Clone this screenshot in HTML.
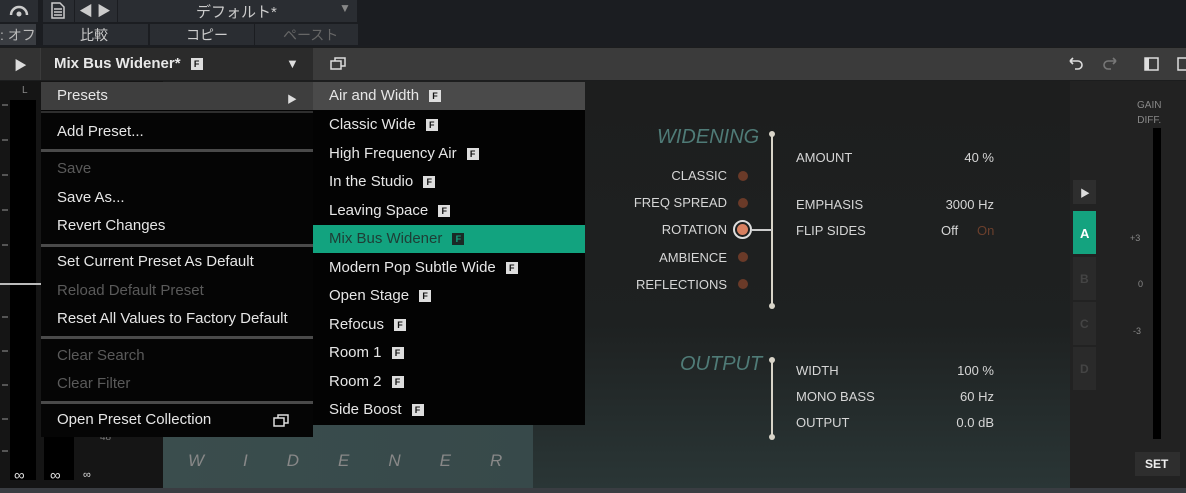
<!DOCTYPE html>
<html><head><meta charset="utf-8"><style>
*{margin:0;padding:0;box-sizing:border-box}
body{width:1186px;height:493px;overflow:hidden;background:#1c1d1e;font-family:"Liberation Sans","Noto Sans CJK JP",sans-serif;position:relative;color:#ddd}
.a{position:absolute}
.t{position:absolute;white-space:nowrap}
.f{display:inline-block;width:12px;height:12px;background:#ddd;color:#111;font-size:9px;font-weight:bold;line-height:12px;text-align:center;margin-left:10px;vertical-align:1px}
.mi{position:absolute;left:57px;font-size:15px;color:#e6e6e6;white-space:nowrap}
.dim{color:#5a5a5a}
.si{position:absolute;left:329px;font-size:15px;color:#e6e6e6;white-space:nowrap}
.sep{position:absolute;left:41px;width:272px;height:3px;background:#4a4a4a}
.lb{position:absolute;font-size:13px;color:#d6d6d6;white-space:nowrap}
.r{text-align:right}
.dot{position:absolute;width:10px;height:10px;border-radius:50%;background:#6a3a28}
.tk{position:absolute;width:6px;height:2px;background:#555}
</style></head><body>
<!-- top bar -->
<div class="a" style="left:0;top:0;width:1186px;height:47px;background:#1b1d21"></div>
<div class="a" style="left:0;top:0;width:38px;height:22px;background:#2a2d32"></div>
<svg class="a" style="left:8px;top:3px" width="22" height="14"><path d="M3 12 A8 8 0 0 1 19 12" stroke="#ccc" stroke-width="2.5" fill="none"/><circle cx="11" cy="11" r="2.5" fill="#ccc"/></svg>
<div class="a" style="left:0;top:24px;width:36px;height:21px;background:#3a3d42"></div>
<div class="t" style="left:0;top:25px;font-size:14px;color:#bbb">: オフ</div>
<div class="a" style="left:43px;top:0;width:31px;height:22px;background:#2a2d32"></div>
<svg class="a" style="left:51px;top:2px" width="14" height="17"><path d="M1 1h8l4 4v11H1z M3 7h8 M3 10h8 M3 13h8" stroke="#ccc" stroke-width="1.5" fill="none"/></svg>
<div class="a" style="left:75px;top:0;width:42px;height:22px;background:#2a2d32"></div>
<div class="t" style="left:79px;top:1px;font-size:14px;color:#ccc">◀ ▶</div>
<div class="a" style="left:118px;top:0;width:239px;height:22px;background:#2a2d32"></div>
<div class="t" style="left:196px;top:1px;font-size:15px;color:#ccc">デフォルト*</div>
<div class="t" style="left:339px;top:1px;font-size:12px;color:#888">▼</div>
<div class="a" style="left:43px;top:24px;width:105px;height:21px;background:#2a2d32"></div>
<div class="t" style="left:80px;top:25px;font-size:14px;color:#ccc">比較</div>
<div class="a" style="left:150px;top:24px;width:104px;height:21px;background:#2a2d32"></div>
<div class="t" style="left:186px;top:25px;font-size:14px;color:#ccc">コピー</div>
<div class="a" style="left:255px;top:24px;width:103px;height:21px;background:#2a2d32"></div>
<div class="t" style="left:283px;top:25px;font-size:14px;color:#666">ペースト</div>
<!-- header -->
<div class="a" style="left:0;top:48px;width:1186px;height:32px;background:#3b3b3b"></div>
<div class="a" style="left:0;top:48px;width:40px;height:32px;background:#333"></div>
<div class="t" style="left:14px;top:55px;font-size:13px;color:#ddd">▶</div>
<div class="a" style="left:41px;top:48px;width:272px;height:32px;background:#2b2b2b"></div>
<div class="t" style="left:54px;top:55px;font-size:15px;font-weight:bold;color:#e8e8e8">Mix Bus Widener*<span class="f">F</span></div>
<div class="t" style="left:286px;top:56px;font-size:13px;color:#ddd">▼</div>
<svg class="a" style="left:330px;top:57px" width="16" height="14"><rect x="5" y="1" width="10" height="8" stroke="#ddd" stroke-width="1.5" fill="none"/><rect x="1" y="4" width="10" height="8" stroke="#ddd" stroke-width="1.5" fill="#3b3b3b"/></svg>
<svg class="a" style="left:1066px;top:56px" width="120" height="18"><path d="M4 5h8a4 4 0 0 1 0 8h-3 M4 5l3-3 M4 5l3 3" stroke="#ddd" stroke-width="1.6" fill="none"/><path d="M50 5h-8a4 4 0 0 0 0 8h3 M50 5l-3-3 M50 5l-3 3" stroke="#777" stroke-width="1.6" fill="none"/><rect x="79" y="2" width="13" height="12" stroke="#ddd" stroke-width="1.5" fill="none"/><rect x="79" y="2" width="4" height="12" fill="#ddd"/><rect x="112" y="2" width="10" height="12" stroke="#ddd" stroke-width="1.5" fill="none"/></svg>
<!-- left meters -->
<div class="a" style="left:0;top:81px;width:163px;height:407px;background:#151515"></div>
<div class="a" style="left:10px;top:100px;width:26px;height:380px;background:#000"></div>
<div class="a" style="left:44px;top:100px;width:30px;height:380px;background:#000"></div>
<div class="tk" style="left:2px;top:104px"></div><div class="tk" style="left:2px;top:139px"></div><div class="tk" style="left:2px;top:174px"></div><div class="tk" style="left:2px;top:209px"></div><div class="tk" style="left:2px;top:244px"></div><div class="tk" style="left:2px;top:316px"></div><div class="tk" style="left:2px;top:350px"></div><div class="tk" style="left:2px;top:384px"></div><div class="tk" style="left:2px;top:418px"></div><div class="tk" style="left:2px;top:450px"></div>
<div class="a" style="left:0;top:283px;width:41px;height:2px;background:#bbb"></div>
<div class="t" style="left:22px;top:85px;font-size:10px;color:#888">L</div>
<div class="t" style="left:14px;top:467px;font-size:15px;color:#ddd">∞</div>
<div class="t" style="left:50px;top:467px;font-size:15px;color:#ddd">∞</div>
<div class="t" style="left:83px;top:469px;font-size:11px;color:#ddd">∞</div>
<div class="t" style="left:100px;top:432px;font-size:10px;color:#777">48</div>
<!-- plugin bg -->
<div class="a" style="left:163px;top:81px;width:907px;height:407px;background:linear-gradient(180deg,#1d1e1e 0%,#1e2121 60%,#2a3636 100%)"></div>
<div class="a" style="left:163px;top:425px;width:370px;height:63px;background:linear-gradient(90deg,#3a4d4d,#37494a)"></div>
<div class="t" style="left:188px;top:451px;font-size:17px;font-style:italic;color:#888;letter-spacing:39px">WIDENER</div>
<!-- widening -->
<div class="t" style="left:657px;top:126px;font-size:20px;font-style:italic;color:#4f7b77">WIDENING</div>
<div class="a" style="left:771px;top:133px;width:2px;height:174px;background:#d8d4c8"></div>
<div class="a" style="left:769px;top:131px;width:6px;height:6px;border-radius:50%;background:#d8d4c8"></div>
<div class="a" style="left:769px;top:303px;width:6px;height:6px;border-radius:50%;background:#d8d4c8"></div>
<div class="lb r" style="left:600px;width:127px;top:168px">CLASSIC</div>
<div class="lb r" style="left:600px;width:127px;top:195px">FREQ SPREAD</div>
<div class="lb r" style="left:600px;width:127px;top:222px">ROTATION</div>
<div class="lb r" style="left:600px;width:127px;top:250px">AMBIENCE</div>
<div class="lb r" style="left:600px;width:127px;top:277px">REFLECTIONS</div>
<div class="dot" style="left:738px;top:171px"></div>
<div class="dot" style="left:738px;top:198px"></div>
<div class="a" style="left:733px;top:220px;width:19px;height:19px;border-radius:50%;border:2px solid #ddd"></div>
<div class="a" style="left:737px;top:224px;width:11px;height:11px;border-radius:50%;background:#d88060"></div>
<div class="a" style="left:752px;top:229px;width:20px;height:2px;background:#ccc"></div>
<div class="dot" style="left:738px;top:252px"></div>
<div class="dot" style="left:738px;top:279px"></div>
<div class="lb" style="left:796px;top:150px">AMOUNT</div>
<div class="lb r" style="left:900px;width:94px;top:150px">40 %</div>
<div class="lb" style="left:796px;top:197px">EMPHASIS</div>
<div class="lb r" style="left:900px;width:94px;top:197px">3000 Hz</div>
<div class="lb" style="left:796px;top:223px">FLIP SIDES</div>
<div class="lb" style="left:941px;top:223px">Off</div>
<div class="lb" style="left:977px;top:223px;color:#6b3f2c">On</div>
<!-- output -->
<div class="t" style="left:680px;top:353px;font-size:20px;font-style:italic;color:#4f7b77">OUTPUT</div>
<div class="a" style="left:771px;top:360px;width:2px;height:78px;background:#d8d4c8"></div>
<div class="a" style="left:769px;top:357px;width:6px;height:6px;border-radius:50%;background:#d8d4c8"></div>
<div class="a" style="left:769px;top:434px;width:6px;height:6px;border-radius:50%;background:#d8d4c8"></div>
<div class="lb" style="left:796px;top:363px">WIDTH</div>
<div class="lb r" style="left:900px;width:94px;top:363px">100 %</div>
<div class="lb" style="left:796px;top:389px">MONO BASS</div>
<div class="lb r" style="left:900px;width:94px;top:389px">60 Hz</div>
<div class="lb" style="left:796px;top:415px">OUTPUT</div>
<div class="lb r" style="left:900px;width:94px;top:415px">0.0 dB</div>
<!-- right panel -->
<div class="a" style="left:1070px;top:81px;width:116px;height:407px;background:#222"></div>
<div class="t" style="left:1137px;top:98px;font-size:10px;color:#888;line-height:15px;text-align:center">GAIN<br>DIFF.</div>
<div class="a" style="left:1153px;top:128px;width:8px;height:311px;background:#000"></div>
<div class="t" style="left:1130px;top:233px;font-size:9px;color:#888">+3</div>
<div class="t" style="left:1138px;top:279px;font-size:9px;color:#888">0</div>
<div class="t" style="left:1133px;top:326px;font-size:9px;color:#888">-3</div>
<div class="a" style="left:1073px;top:180px;width:23px;height:24px;background:#2e2e2e"></div>
<div class="t" style="left:1080px;top:185px;font-size:10px;color:#ddd">▶</div>
<div class="a" style="left:1073px;top:211px;width:23px;height:43px;background:#14a37f"></div>
<div class="t" style="left:1080px;top:226px;font-size:13px;font-weight:bold;color:#fff">A</div>
<div class="a" style="left:1073px;top:257px;width:23px;height:43px;background:#2a2a2a"></div>
<div class="t" style="left:1080px;top:272px;font-size:12px;font-weight:bold;color:#444">B</div>
<div class="a" style="left:1073px;top:302px;width:23px;height:43px;background:#2a2a2a"></div>
<div class="t" style="left:1080px;top:317px;font-size:12px;font-weight:bold;color:#444">C</div>
<div class="a" style="left:1073px;top:347px;width:23px;height:43px;background:#2a2a2a"></div>
<div class="t" style="left:1080px;top:362px;font-size:12px;font-weight:bold;color:#444">D</div>
<div class="a" style="left:1135px;top:452px;width:45px;height:24px;background:#2e2e2e"></div>
<div class="t" style="left:1145px;top:457px;font-size:12px;font-weight:bold;color:#eee">SET</div>
<div class="a" style="left:0;top:488px;width:1186px;height:5px;background:#3a3d42"></div>
<!-- menu -->
<div class="a" style="left:41px;top:82px;width:272px;height:355px;background:#050505"></div>
<div class="a" style="left:41px;top:82px;width:272px;height:28px;background:#3e3e3e"></div>
<div class="mi" style="top:87px">Presets</div>
<div class="t" style="left:287px;top:91px;font-size:10px;color:#ddd">▶</div>
<div class="sep" style="top:111px;height:2px;background:#2e2e2e"></div>
<div class="mi" style="top:123px">Add Preset...</div>
<div class="sep" style="top:149px"></div>
<div class="mi dim" style="top:160px">Save</div>
<div class="mi" style="top:189px">Save As...</div>
<div class="mi" style="top:217px">Revert Changes</div>
<div class="sep" style="top:244px"></div>
<div class="mi" style="top:253px">Set Current Preset As Default</div>
<div class="mi dim" style="top:282px">Reload Default Preset</div>
<div class="mi" style="top:310px">Reset All Values to Factory Default</div>
<div class="sep" style="top:336px"></div>
<div class="mi dim" style="top:347px">Clear Search</div>
<div class="mi dim" style="top:375px">Clear Filter</div>
<div class="sep" style="top:401px"></div>
<div class="mi" style="top:411px">Open Preset Collection</div>
<svg class="a" style="left:273px;top:414px" width="16" height="14"><rect x="5" y="1" width="10" height="8" stroke="#ddd" stroke-width="1.5" fill="none"/><rect x="1" y="4" width="10" height="8" stroke="#ddd" stroke-width="1.5" fill="#050505"/></svg>
<!-- submenu -->
<div class="a" style="left:313px;top:82px;width:272px;height:343px;background:#030303"></div>
<div class="a" style="left:313px;top:82px;width:272px;height:28px;background:#4a4a4a"></div>
<div class="a" style="left:313px;top:225px;width:272px;height:28px;background:#12a37f"></div>
<div class="si" style="top:87px">Air and Width<span class="f">F</span></div>
<div class="si" style="top:116px">Classic Wide<span class="f">F</span></div>
<div class="si" style="top:145px">High Frequency Air<span class="f">F</span></div>
<div class="si" style="top:173px">In the Studio<span class="f">F</span></div>
<div class="si" style="top:202px">Leaving Space<span class="f">F</span></div>
<div class="si" style="top:230px;color:#1e3d35">Mix Bus Widener<span class="f" style="background:#1a2a26;color:#12a37f">F</span></div>
<div class="si" style="top:259px">Modern Pop Subtle Wide<span class="f">F</span></div>
<div class="si" style="top:287px">Open Stage<span class="f">F</span></div>
<div class="si" style="top:316px">Refocus<span class="f">F</span></div>
<div class="si" style="top:344px">Room 1<span class="f">F</span></div>
<div class="si" style="top:373px">Room 2<span class="f">F</span></div>
<div class="si" style="top:401px">Side Boost<span class="f">F</span></div>
</body></html>
